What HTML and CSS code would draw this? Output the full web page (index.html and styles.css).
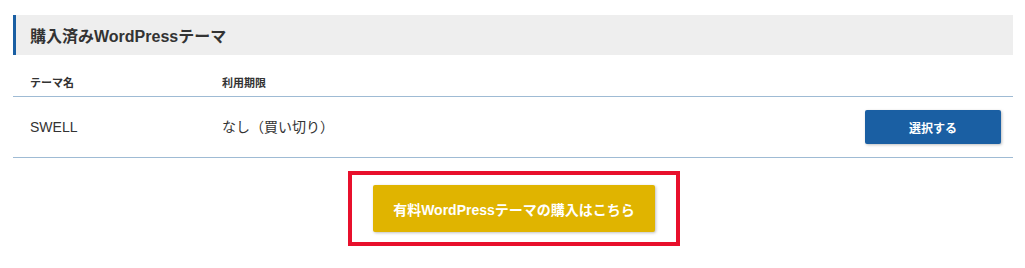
FILE: index.html
```html
<!DOCTYPE html>
<html lang="ja">
<head>
<meta charset="utf-8">
<link rel="stylesheet" href="styles.css">
</head>
<body>
<div class="wrap">
  <h2 class="section-title">購入済みWordPressテーマ</h2>
  <div class="theme-table">
    <div class="row head">
      <div class="c1">テーマ名</div>
      <div class="c2">利用期限</div>
      <div class="c3"></div>
    </div>
    <div class="row body">
      <div class="c1">SWELL</div>
      <div class="c2">なし（買い切り）</div>
      <div class="c3"><button class="btn-select">選択する</button></div>
    </div>
  </div>
  <div class="cta-area">
    <div class="highlight">
      <button class="btn-buy">有料WordPressテーマの購入はこちら</button>
    </div>
  </div>
</div>
</body>
</html>
```

FILE: styles.css
```css
* { box-sizing: border-box; }
html, body { margin: 0; padding: 0; background: #fff; }
body {
  font-family: "Liberation Sans", "Noto Sans CJK JP", sans-serif;
  color: #333;
}
.wrap {
  width: 1000px;
  margin-left: 13px;
  padding-top: 15px;
}
.section-title {
  margin: 0;
  height: 40px;
  background: #eeeeee;
  border-left: 3px solid #1a5fa3;
  padding-left: 14px;
  display: flex;
  align-items: center;
  font-size: 16px;
  font-weight: bold;
  color: #333;
}
.row {
  display: grid;
  grid-template-columns: 192px 1fr auto;
  padding-left: 17px;
  padding-right: 12px;
  border-bottom: 1px solid #9fbbd4;
  align-items: center;
}
.row.head {
  padding-top: 20px;
  padding-bottom: 5px;
  font-size: 11px;
  font-weight: bold;
  line-height: 16px;
}
.row.body {
  padding-top: 13px;
  padding-bottom: 13px;
  font-size: 14px;
  line-height: 20px;
}
.btn-select {
  width: 136px;
  height: 34px;
  border: none;
  border-radius: 2px;
  background: #1a5fa3;
  color: #fff;
  font-family: inherit;
  font-size: 12px;
  font-weight: bold;
  box-shadow: 1px 1px 3px rgba(0,0,0,0.25);
  display: block;
}
.cta-area {
  display: flex;
  justify-content: center;
  padding-top: 13px;
}
.highlight {
  border: 4px solid #e8102c;
  padding: 10px 21px;
  margin-left: 2px;
}
.btn-buy {
  display: block;
  width: 282px;
  height: 47px;
  border: none;
  border-radius: 2px;
  background: #e0b400;
  color: #fff;
  font-family: inherit;
  font-size: 14px;
  font-weight: bold;
  box-shadow: 1px 1px 3px rgba(0,0,0,0.25);
}
```
